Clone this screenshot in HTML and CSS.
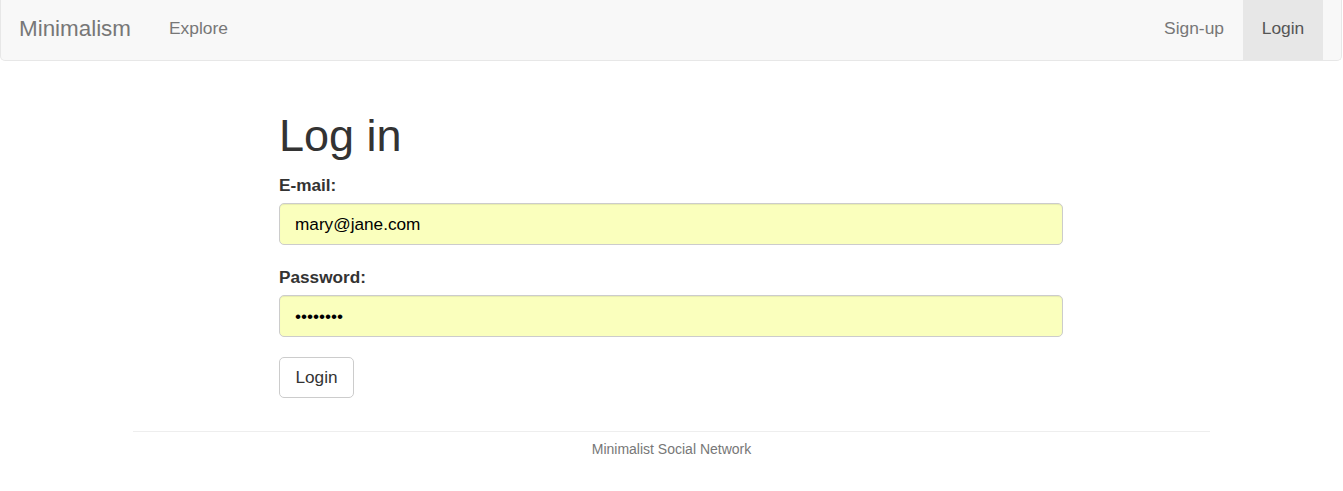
FILE: index.html
```html
<!DOCTYPE html>
<html lang="en">
<head>
<meta charset="utf-8">
<title>Log in - Minimalism</title>
<link rel="stylesheet" href="styles.css">
</head>
<body>
<nav class="navbar">
  <a class="brand" href="#">Minimalism</a>
  <ul class="nav nav-left">
    <li><a href="#">Explore</a></li>
  </ul>
  <ul class="nav nav-right">
    <li><a href="#">Sign-up</a></li>
    <li class="active"><a href="#">Login</a></li>
  </ul>
</nav>
<main class="container">
  <h1 class="title">Log in</h1>
  <form class="login-form">
    <div class="form-group">
      <label class="label" for="email">E-mail:</label>
      <input class="field" id="email" type="email" value="mary@jane.com">
    </div>
    <div class="form-group">
      <label class="label" for="password">Password:</label>
      <input class="field" id="password" type="password" value="12345678">
    </div>
    <button class="btn" type="button">Login</button>
  </form>
</main>
<footer class="footer">
  <hr class="rule">
  <p class="footer-text">Minimalist Social Network</p>
</footer>
</body>
</html>
```
FILE: styles.css
```css
* { box-sizing: border-box; }
html, body { margin: 0; padding: 0; background: #fff; }
body {
  font-family: "Liberation Sans", Arial, Helvetica, sans-serif;
  font-size: 17.2px;
  color: #333;
}
a { text-decoration: none; }

.navbar {
  display: flex;
  align-items: stretch;
  height: 61px;
  margin-right: 1px;
  background: #f8f8f8;
  border: 1px solid #e7e7e7;
  border-top: 0;
  border-radius: 0 0 5px 5px;
  padding: 0 18px 3px 18px;
}
.navbar .nav { margin-bottom: -3px; }
.brand {
  display: flex;
  align-items: center;
  font-size: 22.4px;
  color: #777;
  margin-right: 19px;
}
.nav {
  display: flex;
  list-style: none;
  margin: 0;
  padding: 0;
}
.nav-right { margin-left: auto; }
.nav li { display: flex; }
.nav a {
  display: flex;
  align-items: center;
  justify-content: center;
  padding: 0 19px 3px;
  color: #777;
  font-size: 17.4px;
}
.nav .active a {
  width: 80px;
  padding: 0 0 3px;
  background: #e7e7e7;
  color: #555;
}

.container {
  width: 784px;
  margin-left: calc(50% - 392.5px);
  padding-top: 51px;
}
.title {
  font-size: 45px;
  line-height: 48px;
  font-weight: 400;
  margin: 0 0 11px;
  color: #333;
}
.form-group { margin-bottom: 18px; }
.form-group + .form-group { margin-bottom: 20px; }
.label {
  display: block;
  font-weight: 700;
  line-height: 24px;
  padding-top: 2px;
  margin-bottom: 6px;
}
.field {
  display: block;
  width: 100%;
  height: 42px;
  padding: 0 15px;
  font-family: inherit;
  font-size: 17.2px;
  color: #000;
  background: #faffbd;
  border: 1px solid #ccc;
  border-radius: 5px;
  box-shadow: inset 0 1px 1px rgba(0,0,0,.075);
  outline: none;
}
.btn {
  display: block;
  width: 75px;
  height: 41px;
  padding: 0;
  font-family: inherit;
  font-size: 17.2px;
  color: #333;
  background: #fff;
  border: 1px solid #ccc;
  border-radius: 5px;
}

.footer {
  width: 1077px;
  margin: 33px auto 0;
}
.rule {
  margin: 0;
  border: 0;
  border-top: 1px solid #eee;
}
.footer-text {
  margin: 7px 0 0;
  text-align: center;
  font-size: 14px;
  line-height: 20px;
  color: #777;
}
```
